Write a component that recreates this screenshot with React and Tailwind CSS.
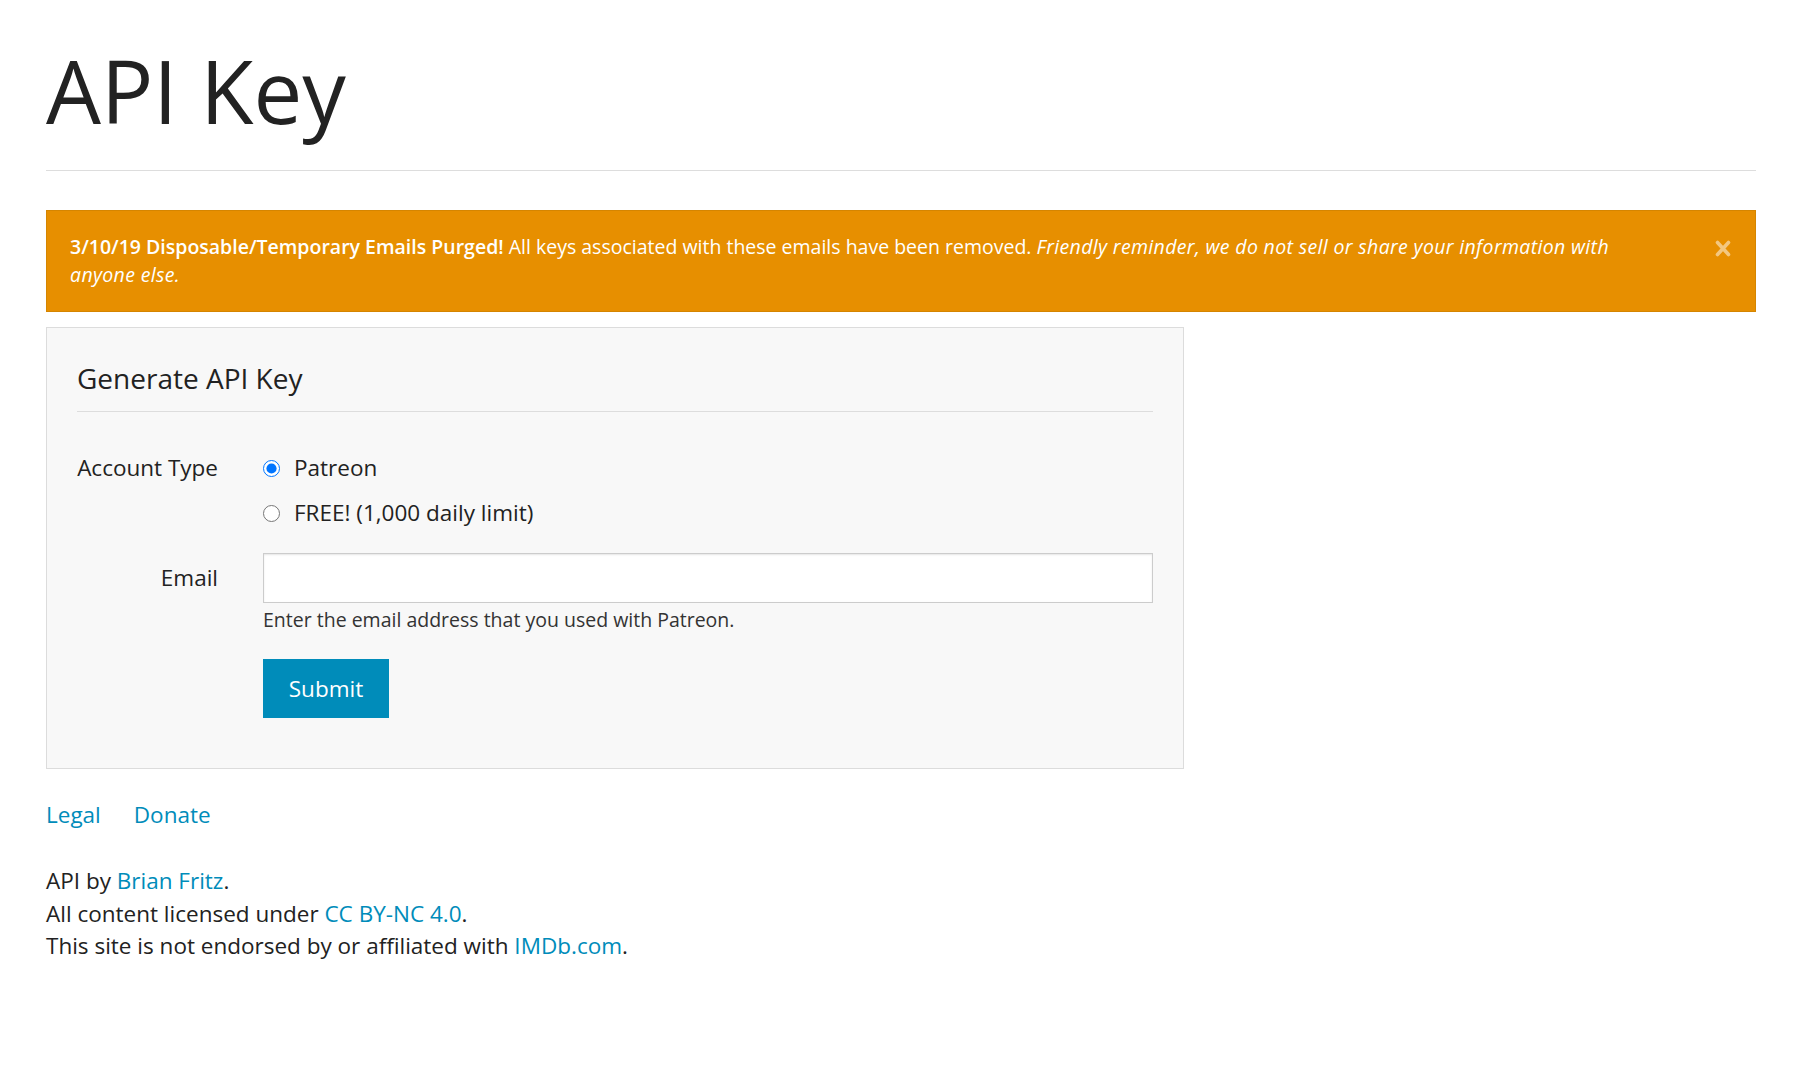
import React from "react";

export default function App() {
  return (
    <div className="font-['Open_Sans',sans-serif] text-[#222] bg-white min-h-[1067px] pl-[46px] pr-[38px] pt-[47px]">
      <h1 className="text-[87px] leading-none font-normal">API Key</h1>
      <div className="mt-[36px] h-px bg-[#dddddd]" />

      <div className="relative mt-[39px] border border-[#d58500] bg-[#e78f00] text-white text-[19.5px] leading-[28px] py-[22px] pl-[23px] pr-[110px]">
        <p>
          <strong className="font-semibold">3/10/19 Disposable/Temporary Emails Purged!</strong> All keys associated with these emails have been removed.{" "}
          <em className="tracking-[0.35px]">Friendly reminder, we do not sell or share your information with anyone else.</em>
        </p>
        <svg className="absolute right-[24px] top-[29px]" width="16" height="17" viewBox="0 0 16 17">
          <path d="M2.5 2.5 L13.5 14.5 M13.5 2.5 L2.5 14.5" stroke="rgba(255,255,255,0.5)" strokeWidth="3.6" strokeLinecap="round" fill="none" />
        </svg>
      </div>

      <div className="mt-[15px] w-[1138px] border border-[#dcdcdc] bg-[#f8f8f8] px-[30px] pt-[33px] pb-[50px]">
        <h2 className="text-[28px] leading-[34px] font-normal text-[#222]">Generate API Key</h2>
        <div className="mt-[16px] h-px bg-[#dddddd]" />

        <div className="mt-[41px] grid grid-cols-[141px_1fr] gap-x-[45px] text-[22.5px]">
          <div className="text-right leading-[30px] whitespace-nowrap">Account Type</div>
          <div className="flex flex-col gap-[15px]">
            <label className="flex items-center gap-[14px] leading-[30px]">
              <input type="radio" name="acct" defaultChecked className="m-0 w-[17px] h-[17px]" />
              <span>Patreon</span>
            </label>
            <label className="flex items-center gap-[14px] leading-[30px]">
              <input type="radio" name="acct" className="m-0 w-[17px] h-[17px]" />
              <span>FREE! (1,000 daily limit)</span>
            </label>
          </div>

          <div className="mt-[25px] text-right leading-[50px]">Email</div>
          <div className="mt-[25px]">
            <input
              type="email"
              className="block w-full h-[50px] bg-white border border-[#cccccc] shadow-[inset_0_1px_2px_rgba(0,0,0,0.1)] px-[10px] text-[20px] outline-none"
            />
            <div className="mt-[5px] text-[19.5px] leading-[24px] text-[#333]">
              Enter the email address that you used with Patreon.
            </div>
            <button className="mt-[27px] w-[126px] h-[59px] bg-[#008cba] text-white text-[22.5px] flex items-center justify-center">
              Submit
            </button>
          </div>
        </div>
      </div>

      <div className="mt-[31px] flex gap-[33px] text-[22.5px] leading-[30px] text-[#008cba]">
        <a>Legal</a>
        <a>Donate</a>
      </div>

      <div className="mt-[35px] text-[22.5px] leading-[32.5px]">
        <div>
          API by <a className="text-[#008cba]">Brian Fritz</a>.
        </div>
        <div>
          All content licensed under <a className="text-[#008cba]">CC BY-NC 4.0</a>.
        </div>
        <div>
          This site is not endorsed by or affiliated with <a className="text-[#008cba]">IMDb.com</a>.
        </div>
      </div>
    </div>
  );
}
